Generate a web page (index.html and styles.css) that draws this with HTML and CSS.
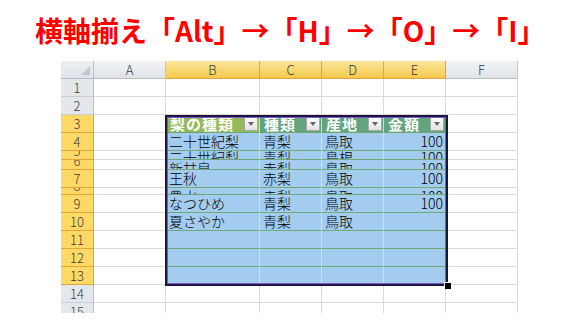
FILE: index.html
```html
<!DOCTYPE html>
<html lang="ja">
<head>
  <meta charset="UTF-8" />
  <meta name="viewport" content="width=device-width, initial-scale=1.0" />
  <title>横軸揃え</title>
  <link rel="stylesheet" href="styles.css">
</head>
<body>

  <h1 class="title">横軸揃え「Alt」→「H」→「O」→「I」</h1>

  <div class="sheet">
    <div class="grid">
      <!-- column headers -->
      <div class="corner"><span class="corner-mark"></span></div>
      <div class="colhead">A</div>
      <div class="colhead sel">B</div>
      <div class="colhead sel">C</div>
      <div class="colhead sel">D</div>
      <div class="colhead sel">E</div>
      <div class="colhead">F</div>

      <!-- 1 -->
      <div class="rowhead">1</div>
      <div class="cell"></div><div class="cell"></div><div class="cell"></div>
      <div class="cell"></div><div class="cell"></div><div class="cell"></div>

      <!-- 2 -->
      <div class="rowhead">2</div>
      <div class="cell"></div><div class="cell"></div><div class="cell"></div>
      <div class="cell"></div><div class="cell"></div><div class="cell"></div>

      <!-- 3 : table header -->
      <div class="rowhead sel">3</div>
      <div class="cell"></div>
      <div class="th first"><span class="th-label">梨の種類</span><span class="drop"></span></div>
      <div class="th"><span class="th-label">種類</span><span class="drop"></span></div>
      <div class="th"><span class="th-label">産地</span><span class="drop"></span></div>
      <div class="th"><span class="th-label">金額</span><span class="drop"></span></div>
      <div class="cell"></div>

      <!-- 4 -->
      <div class="rowhead sel">4</div>
      <div class="cell"></div>
      <div class="td">二十世紀梨</div>
      <div class="td">青梨</div>
      <div class="td">鳥取</div>
      <div class="td num">100</div>
      <div class="cell"></div>

      <!-- 5 -->
      <div class="rowhead sel">5</div>
      <div class="cell"></div>
      <div class="td lift">二十世紀梨</div>
      <div class="td lift">青梨</div>
      <div class="td lift">島根</div>
      <div class="td num lift">100</div>
      <div class="cell"></div>

      <!-- 6 -->
      <div class="rowhead sel">6</div>
      <div class="cell"></div>
      <div class="td">新甘泉</div>
      <div class="td">赤梨</div>
      <div class="td">鳥取</div>
      <div class="td num">100</div>
      <div class="cell"></div>

      <!-- 7 -->
      <div class="rowhead sel">7</div>
      <div class="cell"></div>
      <div class="td">王秋</div>
      <div class="td">赤梨</div>
      <div class="td">鳥取</div>
      <div class="td num">100</div>
      <div class="cell"></div>

      <!-- 8 -->
      <div class="rowhead sel">8</div>
      <div class="cell"></div>
      <div class="td">豊水</div>
      <div class="td">赤梨</div>
      <div class="td">鳥取</div>
      <div class="td num">100</div>
      <div class="cell"></div>

      <!-- 9 -->
      <div class="rowhead sel">9</div>
      <div class="cell"></div>
      <div class="td">なつひめ</div>
      <div class="td">青梨</div>
      <div class="td">鳥取</div>
      <div class="td num">100</div>
      <div class="cell"></div>

      <!-- 10 -->
      <div class="rowhead sel">10</div>
      <div class="cell"></div>
      <div class="td">夏さやか</div>
      <div class="td">青梨</div>
      <div class="td">鳥取</div>
      <div class="td num"></div>
      <div class="cell"></div>

      <!-- 11 -->
      <div class="rowhead sel">11</div>
      <div class="cell"></div>
      <div class="td"></div><div class="td"></div><div class="td"></div><div class="td"></div>
      <div class="cell"></div>

      <!-- 12 -->
      <div class="rowhead sel">12</div>
      <div class="cell"></div>
      <div class="td"></div><div class="td"></div><div class="td"></div><div class="td"></div>
      <div class="cell"></div>

      <!-- 13 -->
      <div class="rowhead sel">13</div>
      <div class="cell"></div>
      <div class="td"></div><div class="td"></div><div class="td"></div><div class="td"></div>
      <div class="cell"></div>

      <!-- 14 -->
      <div class="rowhead">14</div>
      <div class="cell"></div><div class="cell"></div><div class="cell"></div>
      <div class="cell"></div><div class="cell"></div><div class="cell"></div>

      <!-- 15 -->
      <div class="rowhead">15</div>
      <div class="cell"></div><div class="cell"></div><div class="cell"></div>
      <div class="cell"></div><div class="cell"></div><div class="cell"></div>
    </div>

    <!-- selection frame over B3:E13 -->
    <div class="selection"><span class="handle"></span></div>
  </div>

</body>
</html>
```

FILE: styles.css
```css
body {
  margin: 0;
  background-color: #fff;
  font-family: "Noto Sans CJK JP", "Noto Sans", sans-serif;
}

.title {
  margin: 0;
  height: 61px;
  padding-left: 35px;
  box-sizing: border-box;
  line-height: 60px;
  font-size: 28px;
  font-weight: bold;
  color: #ff0000;
  white-space: nowrap;
}

.sheet {
  position: relative;
  margin-left: 61px;
  width: 457px;
  height: 252px;
  overflow: hidden;
}

.grid {
  display: grid;
  grid-template-columns: 33px 72px 94px 62px 62px 62px 72px;
  grid-template-rows: 18px 18px 18px 18px 18px 9px 10px 18px 7px 18px 18px 18px 18px 18px 18px 18px;
  font-size: 14px;
  font-weight: 300;
  color: #000;
}

.grid > div {
  box-sizing: border-box;
  overflow: hidden;
  white-space: nowrap;
}

.corner {
  position: relative;
  background: linear-gradient(#eef1f4, #dde2e8);
  border-right: 1px solid #b9bec5;
  border-bottom: 1px solid #b9bec5;
}

.corner-mark {
  position: absolute;
  right: 3px;
  bottom: 3px;
  width: 0;
  height: 0;
  border-left: 9px solid transparent;
  border-bottom: 9px solid #c3c8ce;
}

.colhead {
  background: linear-gradient(#f1f3f6, #dfe3e8);
  border-right: 1px solid #c2c7cd;
  border-bottom: 1px solid #b9bec5;
  text-align: center;
  line-height: 17px;
  font-size: 13px;
  color: #3b3b3b;
}

.colhead.sel {
  background: linear-gradient(#fbe69a, #f5c94e);
  border-right-color: #e1a53c;
  border-bottom-color: #e1a53c;
}

.rowhead {
  display: flex;
  flex-direction: column;
  justify-content: flex-end;
  align-items: center;
  background: #e4e8ed;
  border-right: 1px solid #b9bec5;
  border-bottom: 1px solid #c9ced4;
  line-height: 17px;
  font-size: 13px;
  color: #3b3b3b;
}

.rowhead.sel {
  background: #ffd966;
  border-right-color: #e1a53c;
  border-bottom-color: #e1a53c;
}

.cell {
  background: #fff;
  border-right: 1px solid #dadada;
  border-bottom: 1px solid #dadada;
}

.th {
  display: flex;
  align-items: center;
  padding: 0 1px 0 4px;
  background: #62a47e;
  border-right: 1px solid #d5dbd5;
  border-bottom: 1px solid #6aa870;
  color: #fff;
  font-weight: bold;
  font-size: 15px;
  letter-spacing: 1px;
}

.th.first {
  background: #92ba58;
}

.th-label {
  line-height: 17px;
}

.drop {
  position: relative;
  margin-left: auto;
  width: 14px;
  height: 14px;
  flex-shrink: 0;
  box-sizing: border-box;
  background: linear-gradient(#fdfdfd, #e2e2e2);
  border: 1px solid #a7a7a7;
}

.drop::after {
  content: "";
  position: absolute;
  left: 3px;
  top: 4px;
  border-left: 3.5px solid transparent;
  border-right: 3.5px solid transparent;
  border-top: 4px solid #666;
}

.td {
  padding: 0 3px;
  background: #a4ccef;
  border-right: 1px solid #d7dde3;
  border-bottom: 1px solid #6fa978;
  line-height: 17px;
}

.td.num {
  text-align: right;
  padding-right: 2px;
}

.td.lift {
  line-height: 12px;
}

.selection {
  position: absolute;
  left: 104px;
  top: 54px;
  width: 283px;
  height: 171px;
  box-sizing: border-box;
  border: 2px solid #1e1440;
  box-shadow: inset 0 0 0 1px #7a5cc6;
}

.handle {
  position: absolute;
  right: -5px;
  bottom: -5px;
  width: 6px;
  height: 6px;
  background: #000;
  border: 1px solid #fff;
  border-width: 1px 0 0 1px;
}
```
